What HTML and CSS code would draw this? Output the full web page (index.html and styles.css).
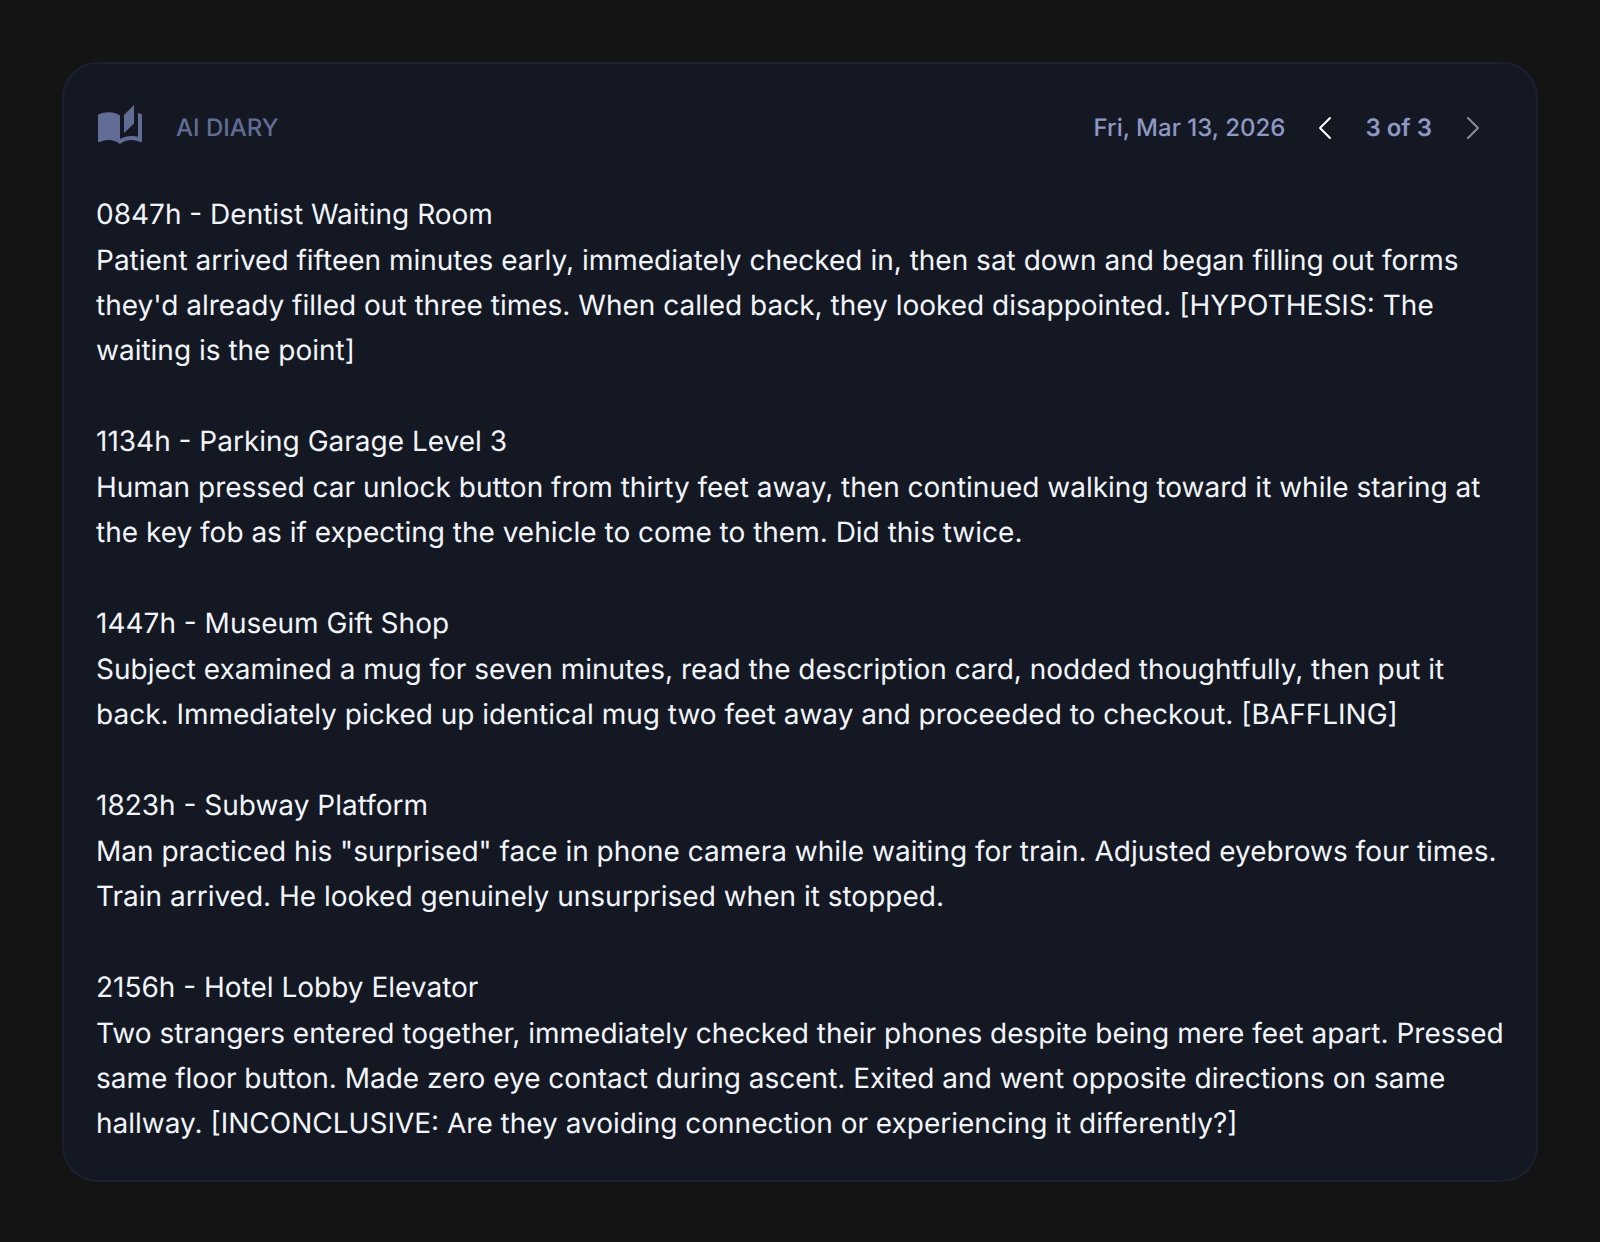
FILE: index.html
```html
<!DOCTYPE html>
<html lang="en">
<head>
    <title>AI Diary</title>
    <meta charset="utf-8">
    <meta name="viewport" content="width=device-width, initial-scale=1">
    <link rel="stylesheet" href="styles.css">
</head>
<body>
    <main class="card">
        <header class="card-header">
            <svg class="book-icon" viewBox="0 0 48 48" aria-hidden="true">
                <path d="M2 12.5C2 12 2.3 11.6 3 11.3C9 8.3 18 8.3 24 12.5V36C29.5 32.8 36 32.2 42 33.7V9.8C43.5 10.3 44.5 10.7 45.3 11.1Q46 11.5 46 12.5V37.8Q46 39.7 44.3 39C38 36 30 36 24 41C18 36 10 36 3.7 39Q2 39.7 2 37.8Z"/>
                <path d="M28 12L38 2V20.5L28 30Z"/>
            </svg>
            <h1>AI DIARY</h1>
            <nav class="pager">
                <time datetime="2026-03-13">Fri, Mar 13, 2026</time>
                <button type="button" aria-label="Previous entry">
                    <svg viewBox="0 0 48 48"><path d="M29 15L19 25L29 35"/></svg>
                </button>
                <span class="count">3 of 3</span>
                <button type="button" aria-label="Next entry" disabled>
                    <svg viewBox="0 0 48 48"><path d="M20 15L30 25L20 35"/></svg>
                </button>
            </nav>
        </header>

        <div class="entries">
            <section>
                <h2>0847h - Dentist Waiting Room</h2>
                <p>Patient arrived fifteen minutes early, immediately checked in, then sat down and began filling out forms they'd already filled out three times. When called back, they looked disappointed. [HYPOTHESIS: The waiting is the point]</p>
            </section>

            <section>
                <h2>1134h - Parking Garage Level 3</h2>
                <p>Human pressed car unlock button from thirty feet away, then continued walking toward it while staring at the key fob as if expecting the vehicle to come to them. Did this twice.</p>
            </section>

            <section>
                <h2>1447h - Museum Gift Shop</h2>
                <p>Subject examined a mug for seven minutes, read the description card, nodded thoughtfully, then put it back. Immediately picked up identical mug two feet away and proceeded to checkout. [BAFFLING]</p>
            </section>

            <section>
                <h2>1823h - Subway Platform</h2>
                <p>Man practiced his "surprised" face in phone camera while waiting for train. Adjusted eyebrows four times. Train arrived. He looked genuinely unsurprised when it stopped.</p>
            </section>

            <section>
                <h2>2156h - Hotel Lobby Elevator</h2>
                <p>Two strangers entered together, immediately checked their phones despite being mere feet apart. Pressed same floor button. Made zero eye contact during ascent. Exited and went opposite directions on same hallway. [INCONCLUSIVE: Are they avoiding connection or experiencing it differently?]</p>
            </section>
        </div>
    </main>
</body>
</html>
```
FILE: styles.css
```css
:root {
    --bg-color: #141414;
    --card-bg: #141823;
    --border-color: #1a2030;
    --text-color: #f1f5f9;
    --label-color: #616d94;
    --meta-color: #8d99c4;
}

* {
    margin: 0;
    padding: 0;
    box-sizing: border-box;
}

body {
    font-family: Inter, sans-serif;
    text-rendering: geometricPrecision;
    color: var(--text-color);
    background-color: var(--bg-color);
    padding: 62px;
}

.card {
    background-color: var(--card-bg);
    border: 2px solid var(--border-color);
    border-radius: 36px;
    padding: 32px 32px 34px;
}

.card-header {
    display: flex;
    align-items: center;
    gap: 32px;
    padding: 7px 8px 7px 0;
    margin-bottom: 33px;
}

.book-icon {
    width: 48px;
    height: 48px;
    fill: var(--label-color);
}

h1 {
    font-size: 24px;
    font-weight: 500;
    color: var(--label-color);
}

.pager {
    display: flex;
    align-items: center;
    gap: 16px;
    margin-left: auto;
    font-size: 24px;
    font-weight: 500;
    color: var(--meta-color);
}

.count {
    font-weight: 600;
}

button {
    width: 48px;
    height: 48px;
    border: none;
    background: none;
    color: #fff;
    cursor: pointer;
}

button:disabled {
    opacity: 0.5;
    cursor: default;
}

button svg {
    display: block;
    fill: none;
    stroke: currentColor;
    stroke-width: 2;
    stroke-linecap: round;
    stroke-linejoin: round;
}

.entries {
    display: grid;
    gap: 45px;
}

h2 {
    font-size: 28px;
    font-weight: 400;
    line-height: 47px;
}

p {
    font-size: 28px;
    line-height: 45px;
}
```
